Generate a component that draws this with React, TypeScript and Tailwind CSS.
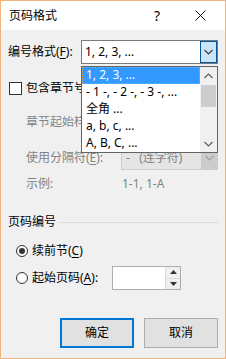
import React from "react";

const Chevron = ({ up = false, color = "#404040" }: { up?: boolean; color?: string }) => (
  <svg width="9" height="6" viewBox="0 0 9 6" className="block">
    <path d={up ? "M0.5 5 L4.5 1 L8.5 5" : "M0.5 1 L4.5 5 L8.5 1"} fill="none" stroke={color} strokeWidth="1.2" />
  </svg>
);

const Key = ({ k }: { k: string }) => <span className="underline underline-offset-2">{k}</span>;

export default function App() {
  const items = ["1, 2, 3, ...", "- 1 -, - 2 -, - 3 -, ...", "全角 ...", "a, b, c, ...", "A, B, C, ..."];

  return (
    <div
      className="relative w-[226px] h-[359px] border border-[#f1b47a] bg-[#f0f0f0] flex flex-col text-[12px] leading-none text-black overflow-hidden"
      style={{ fontFamily: '"Noto Sans", "Noto Sans CJK SC", sans-serif' }}
    >
      {/* title bar */}
      <div className="h-[29px] bg-white flex items-center pl-[8px] shrink-0">
        <span className="text-[12px]">页码格式</span>
        <span className="ml-auto w-[14px] text-center text-[14px]">?</span>
        <svg width="11" height="11" viewBox="0 0 11 11" className="ml-[31px] mr-[19px]">
          <path d="M0.5 0.5 L10.5 10.5 M10.5 0.5 L0.5 10.5" stroke="#111" strokeWidth="1" />
        </svg>
      </div>

      <div className="flex flex-col px-[7px]">
        {/* 编号格式 */}
        <div className="mt-[10px] h-[24px] flex items-center">
          <span>编号格式(<Key k="F" />):</span>
          <div className="ml-auto w-[137px] h-[24px] border border-[#7a7a7a] bg-white flex items-center shrink-0">
            <span className="pl-[3px]">1, 2, 3, ...</span>
            <div className="ml-auto w-[17px] h-full bg-[#cce4f7] border border-[#005499] flex items-center justify-center">
              <Chevron />
            </div>
          </div>
        </div>

        {/* checkbox (label runs under the open list) */}
        <div className="mt-[16px] h-[16px] flex items-center">
          <div className="w-[13px] h-[13px] border border-[#333] bg-white ml-[1px] shrink-0" />
          <span className="ml-[4px] w-[56px] overflow-hidden whitespace-nowrap">包含章节号(N)</span>
        </div>

        {/* 章节起始样式 */}
        <div className="mt-[14px] h-[24px] flex items-center pl-[18px] text-[#838383]">
          <span className="w-[55px] overflow-hidden whitespace-nowrap">章节起始样式(P):</span>
          <div className="ml-auto w-[97px] h-[24px] border border-[#cccccc] bg-[#e5e5e5] shrink-0" />
        </div>

        {/* 使用分隔符 */}
        <div className="mt-[12px] h-[24px] flex items-center pl-[18px] text-[#838383]">
          <span>使用分隔符(<Key k="E" />):</span>
          <div className="ml-auto w-[97px] h-[24px] border border-[#cccccc] bg-[#e5e5e5] flex items-center shrink-0">
            <span className="pl-[4px]">-&nbsp;&nbsp;&nbsp;(连字符)</span>
            <div className="ml-auto w-[16px] h-full bg-[#cccccc] flex items-center justify-center">
              <Chevron color="#a0a0a0" />
            </div>
          </div>
        </div>

        {/* 示例 */}
        <div className="mt-[6px] h-[16px] flex items-center pl-[18px] text-[#838383]">
          <span className="w-[96px]">示例:</span>
          <span>1-1, 1-A</span>
        </div>

        {/* 页码编号 */}
        <div className="mt-[22px] h-[16px] flex items-center">
          <span>页码编号</span>
          <div className="flex-1 ml-[3px] h-px bg-[#dcdcdc]" />
        </div>

        <div className="mt-[13px] h-[16px] flex items-center pl-[8px]">
          <div className="w-[12px] h-[12px] rounded-full border border-[#333] bg-white flex items-center justify-center shrink-0">
            <div className="w-[6px] h-[6px] rounded-full bg-[#333]" />
          </div>
          <span className="ml-[4px]">续前节(<Key k="C" />)</span>
        </div>

        <div className="mt-[7px] h-[24px] flex items-center pl-[8px]">
          <div className="w-[12px] h-[12px] rounded-full border border-[#333] bg-white shrink-0" />
          <span className="ml-[4px] w-[80px] shrink-0">起始页码(<Key k="A" />):</span>
          <div className="w-[69px] h-[24px] border border-[#adadad] bg-white flex justify-end shrink-0">
            <div className="w-[15px] h-full flex flex-col border-l border-[#dcdcdc]">
              <div className="flex-1 bg-[#f0f0f0] border-b border-[#dcdcdc] flex items-center justify-center">
                <svg width="7" height="4" viewBox="0 0 7 4"><path d="M0 4 L3.5 0 L7 4 Z" fill="#333" /></svg>
              </div>
              <div className="flex-1 bg-[#f0f0f0] flex items-center justify-center">
                <svg width="7" height="4" viewBox="0 0 7 4"><path d="M0 0 L3.5 4 L7 0 Z" fill="#333" /></svg>
              </div>
            </div>
          </div>
        </div>

        {/* buttons */}
        <div className="mt-[28px] flex justify-end gap-[10px]">
          <button className="w-[74px] h-[30px] border-2 border-[#0078d7] bg-[#e1e1e1] text-[12px]">确定</button>
          <button className="w-[74px] h-[30px] border border-[#adadad] bg-[#e1e1e1] text-[12px]">取消</button>
        </div>
      </div>

      {/* open dropdown list */}
      <div className="absolute left-[80px] top-[65px] w-[137px] h-[87px] border border-[#646464] bg-white flex">
        <div className="flex-1 flex flex-col">
          {items.map((t, i) => (
            <div
              key={t}
              className={
                i === 0
                  ? "h-[16.8px] flex items-center pl-[3px] bg-[#3399ff] text-white border border-dotted border-[#f0a030]"
                  : "h-[16.8px] flex items-center pl-[4px]"
              }
            >
              {t}
            </div>
          ))}
        </div>
        <div className="w-[17px] bg-[#f0f0f0] flex flex-col items-center">
          <div className="h-[17px] flex items-center justify-center">
            <Chevron up color="#606060" />
          </div>
          <div className="w-[15px] h-[22px] bg-[#cdcdcd] mt-[1px]" />
          <div className="mt-auto h-[17px] flex items-center justify-center">
            <Chevron color="#606060" />
          </div>
        </div>
      </div>
    </div>
  );
}
